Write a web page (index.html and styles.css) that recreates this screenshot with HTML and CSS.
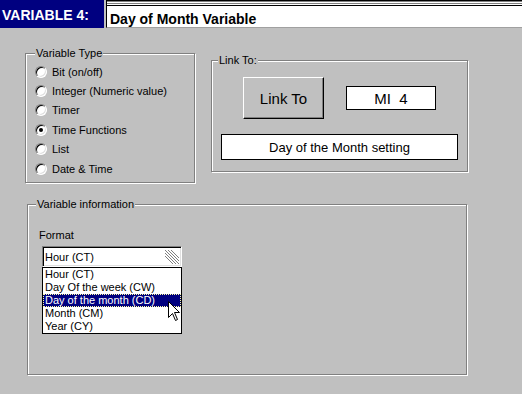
FILE: index.html
```html
<!DOCTYPE html>
<html lang="en">
<head>
    <meta charset="UTF-8">
    <title>Variable 4</title>
    <link rel="stylesheet" href="styles.css">
</head>
<body>
    <!-- Title strip: variable number and name -->
    <div class="titlebar">
        <div class="var-label">VARIABLE 4:</div>
        <div class="var-name">Day of Month Variable</div>
    </div>

    <div class="top-row">
        <div class="group type-group">
            <span class="legend">Variable Type</span>
            <ul class="radio-list">
                <li><span class="radio"></span>Bit (on/off)</li>
                <li><span class="radio"></span>Integer (Numeric value)</li>
                <li><span class="radio"></span>Timer</li>
                <li><span class="radio checked"></span>Time Functions</li>
                <li><span class="radio"></span>List</li>
                <li><span class="radio"></span>Date &amp; Time</li>
            </ul>
        </div>

        <div class="group link-group">
            <span class="legend">Link To:</span>
            <div class="link-row">
                <button class="link-button">Link To</button>
                <div class="field mi-field">MI&nbsp; 4</div>
            </div>
            <div class="field setting-field">Day of the Month setting</div>
        </div>
    </div>

    <div class="group info-group">
        <span class="legend">Variable information</span>
        <div class="format-label">Format</div>
        <div class="combo">
            <span class="combo-text">Hour (CT)</span>
            <svg class="combo-grip" width="16" height="16" viewBox="0 0 16 16">
                <path d="M1 1 L15 15 M1 4 L12 15 M1 7 L9 15 M4 1 L15 12 M7 1 L15 9" stroke="#808080" stroke-width="1" fill="none"/>
            </svg>
        </div>
        <ul class="dropdown">
            <li>Hour (CT)</li>
            <li>Day Of the week (CW)</li>
            <li class="selected">Day of the month (CD)</li>
            <li>Month (CM)</li>
            <li>Year (CY)</li>
        </ul>
        <!-- mouse pointer over the list -->
        <svg class="cursor" width="13" height="21" viewBox="0 0 13 21">
            <path d="M0.5 0.5 L0.5 16.5 L4.5 12.5 L7.5 19.5 L9.5 18.5 L6.5 11.5 L11.5 11.5 Z" fill="#fff" stroke="#000" stroke-width="1"/>
        </svg>
    </div>
</body>
</html>
```

FILE: styles.css
```css
body {
    margin: 0;
    width: 522px;
    height: 394px;
    background-color: #c0c0c0;
    font-family: "Liberation Sans", Arial, sans-serif;
    font-size: 11px;
    color: #000;
    overflow: hidden;
}
.titlebar {
    display: flex;
    height: 28px;
}
.var-label {
    width: 104px;
    background-color: #000080;
    color: #fff;
    font-size: 14px;
    font-weight: bold;
    line-height: 14px;
    padding: 8px 0 0 2px;
    box-sizing: border-box;
}
.var-name {
    flex: 1;
    margin-left: 2px;
    background-color: #fff;
    border-left: 1px solid #000;
    border-bottom: 1px solid #a0a0a0;
    box-shadow: inset 0 1px 0 #000, inset 0 2px 0 #808080, inset 0 3px 0 #fff,
        inset 0 4px 0 #808080, inset 0 5px 0 #fff, inset 0 6px 0 #000;
    font-size: 14px;
    font-weight: bold;
    line-height: 14px;
    padding: 12px 0 0 3px;
    box-sizing: border-box;
}
.top-row {
    display: flex;
    align-items: flex-start;
    margin-top: 25px;
    padding-left: 25px;
}
.group {
    display: flex;
    flex-direction: column;
    align-items: flex-start;
    border: 1px solid #808080;
    box-shadow: inset 1px 1px 0 #fff, 1px 1px 0 #fff;
    box-sizing: border-box;
}
.legend {
    margin-top: -7px;
    padding: 0 1px;
    line-height: 13px;
    background-color: #c0c0c0;
}
.type-group {
    width: 170px;
    height: 130px;
}
.type-group .legend {
    margin-left: 9px;
}
.radio-list {
    list-style: none;
    margin: 2px 0 0 9px;
    padding: 0;
}
.radio-list li {
    display: flex;
    align-items: center;
    gap: 5px;
    height: 19.4px;
}
.radio {
    width: 12px;
    height: 12px;
    border-radius: 50%;
    box-sizing: border-box;
    background-color: #fff;
    border: 1px solid;
    border-color: #808080 #fff #fff #808080;
    box-shadow: inset 1px 1px 0 #000, inset -1px -1px 0 #dfdfdf;
    display: flex;
    align-items: center;
    justify-content: center;
}
.radio.checked::after {
    content: "";
    width: 4px;
    height: 4px;
    border-radius: 50%;
    background-color: #000;
}
.link-group {
    width: 257px;
    height: 112px;
    margin: 7px 0 0 16px;
}
.link-group .legend {
    margin-left: 6px;
}
.link-row {
    display: flex;
    align-items: center;
    margin: 10px 0 0 31px;
}
.link-button {
    width: 81px;
    height: 42px;
    padding: 0;
    background-color: #c0c0c0;
    border: 1px solid;
    border-color: #fff #000 #000 #fff;
    box-shadow: inset -1px -1px 0 #808080;
    font-family: "Liberation Sans", Arial, sans-serif;
    font-size: 15px;
    color: #000;
}
.field {
    background-color: #fff;
    border: 1px solid #000;
    box-sizing: border-box;
    display: flex;
    align-items: center;
    justify-content: center;
}
.mi-field {
    width: 90px;
    height: 24px;
    margin-left: 22px;
    font-size: 15px;
}
.setting-field {
    width: 237px;
    height: 26px;
    margin: 15px 0 0 9px;
    font-size: 13px;
}
.info-group {
    position: relative;
    width: 440px;
    height: 171px;
    margin: 21px 0 0 27px;
}
.info-group .legend {
    margin-left: 8px;
}
.format-label {
    margin: 18px 0 0 11px;
    line-height: 13px;
}
.combo {
    display: flex;
    align-items: center;
    justify-content: space-between;
    width: 140px;
    height: 21px;
    margin: 4px 0 0 14px;
    padding: 0 1px 0 1px;
    box-sizing: border-box;
    background-color: #fff;
    border: 1px solid;
    border-color: #808080 #fff #fff #808080;
    box-shadow: inset 1px 1px 0 #000, inset -1px -1px 0 #dfdfdf;
}
.combo-text {
    padding-left: 1px;
}
.combo-grip {
    align-self: flex-end;
    margin-bottom: 1px;
}
.dropdown {
    list-style: none;
    margin: 0 0 0 14px;
    padding: 0;
    width: 140px;
    box-sizing: border-box;
    background-color: #fff;
    border: 1px solid #000;
}
.dropdown li {
    height: 13px;
    line-height: 13px;
    padding-left: 2px;
}
.dropdown .selected {
    background-color: #000080;
    color: #fff;
    outline: 1px dotted #ffffa0;
    outline-offset: -1px;
}
.cursor {
    position: absolute;
    left: 140px;
    top: 96px;
}
```
